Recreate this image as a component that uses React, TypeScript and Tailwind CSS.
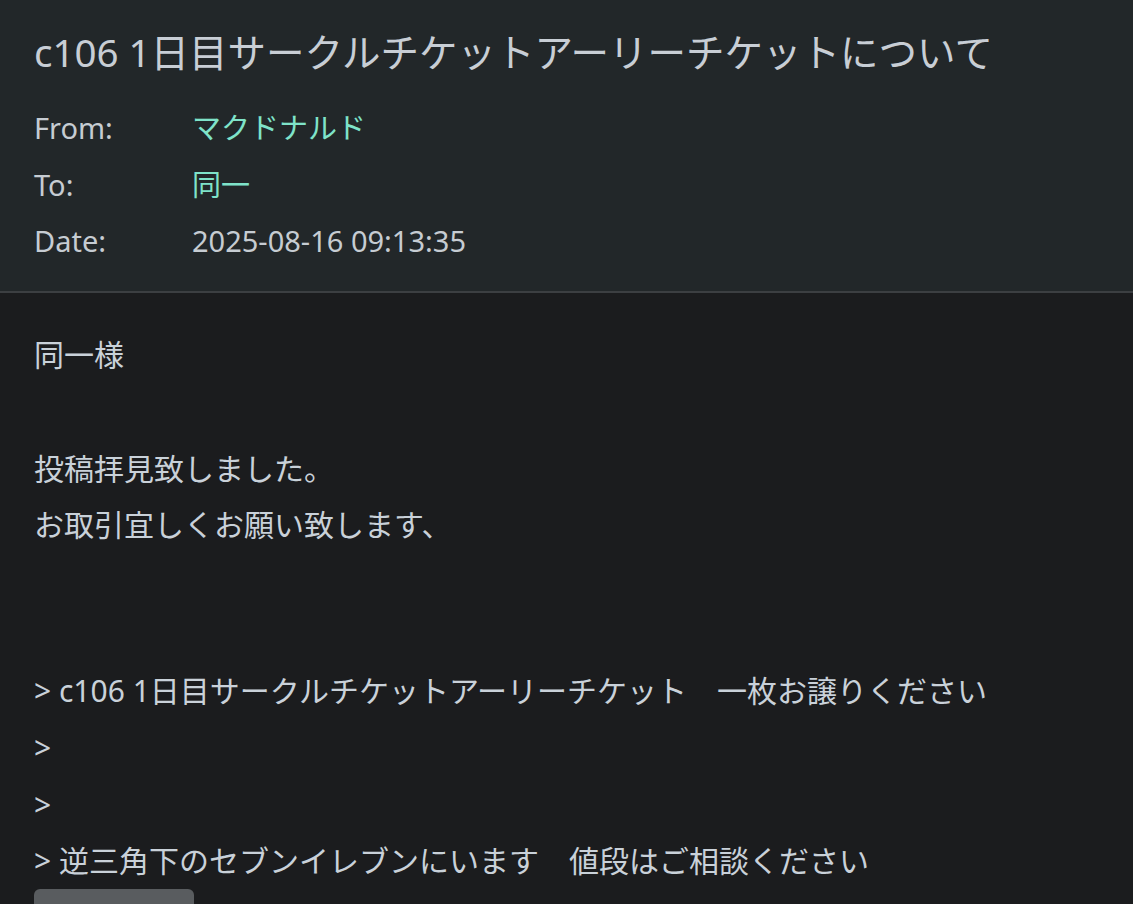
const font = { fontFamily: '"Noto Sans", "Noto Sans CJK JP", sans-serif' };

function HeaderRow({ label, value, accent }: { label: string; value: string; accent?: boolean }) {
  return (
    <div className="flex leading-[56.7px]">
      <div className="w-[158px] shrink-0 text-[#c6ccd2]">{label}</div>
      <div className={accent ? 'text-[#7fe3c9]' : 'text-[#c6ccd2]'}>{value}</div>
    </div>
  );
}

export default function App() {
  return (
    <div className="min-h-[904px] w-[1133px] bg-[#1b1c1e] overflow-hidden" style={font}>
      <header className="bg-[#222729] border-b-2 border-[#3c3f42] px-[34px] pt-[27px] pb-[21px]">
        <h1 className="text-[38.5px] leading-[50px] text-[#c8ced5] font-normal mb-[23px] whitespace-nowrap">
          c106 1日目サークルチケットアーリーチケットについて
        </h1>
        <div className="text-[29px]">
          <HeaderRow label="From:" value="マクドナルド" accent />
          <HeaderRow label="To:" value="同一" accent />
          <HeaderRow label="Date:" value="2025-08-16 09:13:35" />
        </div>
      </header>

      <main className="px-[34px] pt-[34px] text-[30px] leading-[56.7px] text-[#c9d1d9]">
        <p>同一様</p>
        <p>&nbsp;</p>
        <p>投稿拝見致しました。</p>
        <p>お取引宜しくお願い致します、</p>
        <p>&nbsp;</p>
        <p>&nbsp;</p>
        <div className="-mt-[4px] whitespace-pre">
          <p>&gt; c106 1日目サークルチケットアーリーチケット　一枚お譲りください</p>
          <p>&gt;</p>
          <p>&gt;</p>
          <p>&gt; 逆三角下のセブンイレブンにいます　値段はご相談ください</p>
        </div>
        <div className="-mt-[1px] h-[40px] w-[160px] rounded-[6px] bg-[#595c5f]" />
      </main>
    </div>
  );
}
